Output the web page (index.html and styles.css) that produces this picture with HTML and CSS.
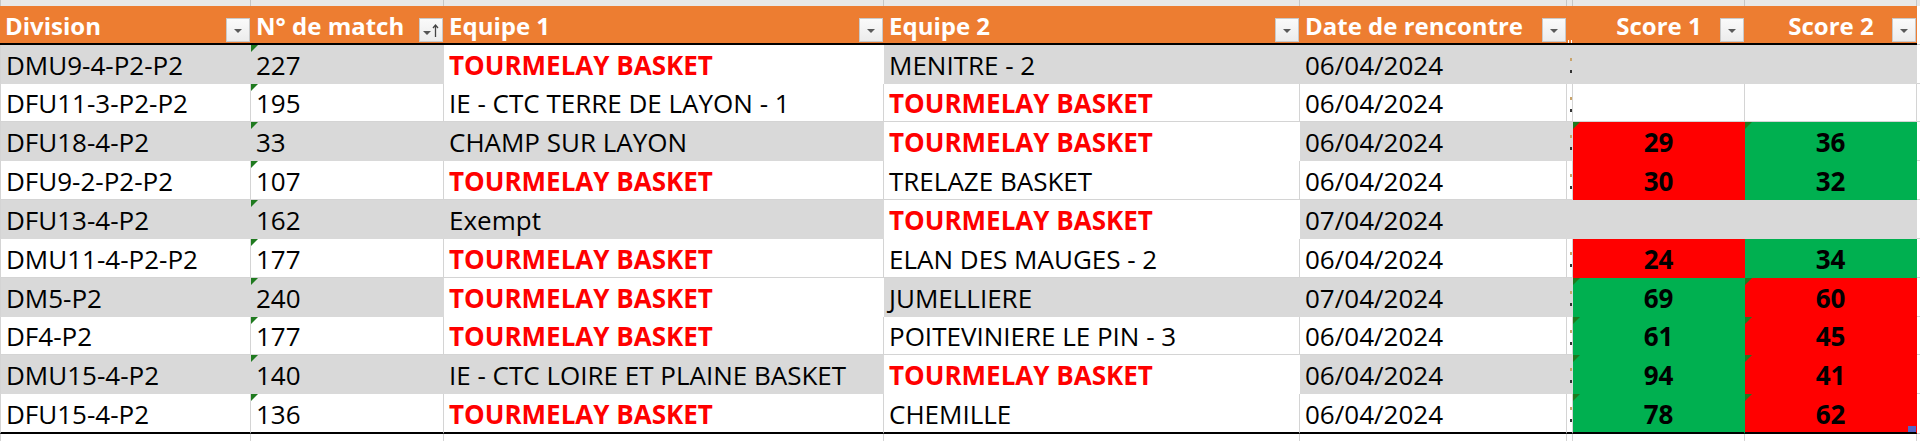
FILE: index.html
```html
<!DOCTYPE html>
<html lang="fr">
<head>
<meta charset="utf-8">
<title>Matchs</title>
<link rel="stylesheet" href="styles.css">
</head>
<body>
<div class="sheet">
  <div class="row top">
    <div class="c"></div><div class="c"></div><div class="c"></div><div class="c"></div><div class="c"></div><div class="c"></div><div class="c"></div><div class="c"></div><div class="c end"></div>
  </div>
  <div class="row head">
    <div class="h">Division<span class="dd"></span></div>
    <div class="h">N° de match<span class="dd sort"><svg width="24" height="24" viewBox="0 0 24 24"><path d="M4 13h8l-4 4z" fill="#555"/><path d="M16.5 19V7M14 10l2.5-3 2.5 3" stroke="#444" stroke-width="1.3" fill="none"/></svg></span></div>
    <div class="h">Equipe 1<span class="dd"></span></div>
    <div class="h">Equipe 2<span class="dd"></span></div>
    <div class="h">Date de rencontre<span class="dd"></span></div>
    <div class="h narrow"><span class="rs"></span></div>
    <div class="h ctr">Score 1<span class="dd"></span></div>
    <div class="h ctr">Score 2<span class="dd"></span></div>
    <div class="h end"></div>
  </div>

  <div class="row r39 band">
    <div class="c">DMU9-4-P2-P2</div><div class="c tri">227</div><div class="c w red">TOURMELAY BASKET</div><div class="c">MENITRE - 2</div><div class="c">06/04/2024</div><div class="c nar"><i></i></div><div class="c"></div><div class="c"></div><div class="c end w"></div>
  </div>
  <div class="row r38">
    <div class="c">DFU11-3-P2-P2</div><div class="c tri">195</div><div class="c">IE - CTC TERRE DE LAYON - 1</div><div class="c red">TOURMELAY BASKET</div><div class="c">06/04/2024</div><div class="c nar"><i></i></div><div class="c"></div><div class="c"></div><div class="c end"></div>
  </div>
  <div class="row r39 band">
    <div class="c">DFU18-4-P2</div><div class="c tri">33</div><div class="c">CHAMP SUR LAYON</div><div class="c w red">TOURMELAY BASKET</div><div class="c">06/04/2024</div><div class="c nar"><i></i></div><div class="c sc lose tri">29</div><div class="c sc win tri">36</div><div class="c end w"></div>
  </div>
  <div class="row r39">
    <div class="c">DFU9-2-P2-P2</div><div class="c tri">107</div><div class="c red">TOURMELAY BASKET</div><div class="c">TRELAZE BASKET</div><div class="c">06/04/2024</div><div class="c nar"><i></i></div><div class="c sc lose">30</div><div class="c sc win">32</div><div class="c end"></div>
  </div>
  <div class="row r39 band">
    <div class="c">DFU13-4-P2</div><div class="c tri">162</div><div class="c">Exempt</div><div class="c w red">TOURMELAY BASKET</div><div class="c">07/04/2024</div><div class="c nar"></div><div class="c"></div><div class="c"></div><div class="c end w"></div>
  </div>
  <div class="row r39">
    <div class="c">DMU11-4-P2-P2</div><div class="c tri">177</div><div class="c red">TOURMELAY BASKET</div><div class="c">ELAN DES MAUGES - 2</div><div class="c">06/04/2024</div><div class="c nar"><i></i></div><div class="c sc lose">24</div><div class="c sc win">34</div><div class="c end"></div>
  </div>
  <div class="row r39 band">
    <div class="c">DM5-P2</div><div class="c tri">240</div><div class="c w red">TOURMELAY BASKET</div><div class="c">JUMELLIERE</div><div class="c">07/04/2024</div><div class="c nar"><i></i></div><div class="c sc win tri">69</div><div class="c sc lose tri">60</div><div class="c end w"></div>
  </div>
  <div class="row r38">
    <div class="c">DF4-P2</div><div class="c tri">177</div><div class="c red">TOURMELAY BASKET</div><div class="c">POITEVINIERE LE PIN - 3</div><div class="c">06/04/2024</div><div class="c nar"><i></i></div><div class="c sc win tri">61</div><div class="c sc lose tri">45</div><div class="c end"></div>
  </div>
  <div class="row r39 band">
    <div class="c">DMU15-4-P2</div><div class="c tri">140</div><div class="c">IE - CTC LOIRE ET PLAINE BASKET</div><div class="c w red">TOURMELAY BASKET</div><div class="c">06/04/2024</div><div class="c nar"><i></i></div><div class="c sc win tri">94</div><div class="c sc lose tri">41</div><div class="c end w"></div>
  </div>
  <div class="row r38 last">
    <div class="c">DFU15-4-P2</div><div class="c tri">136</div><div class="c red">TOURMELAY BASKET</div><div class="c">CHEMILLE</div><div class="c">06/04/2024</div><div class="c nar"><i></i></div><div class="c sc win tri">78</div><div class="c sc lose tri">62<span class="handle"></span></div><div class="c end"></div>
  </div>

  <div class="row tail">
    <div class="c"></div><div class="c"></div><div class="c"></div><div class="c"></div><div class="c"></div><div class="c"></div><div class="c"></div><div class="c"></div><div class="c end"></div>
  </div>
</div>
</body>
</html>
```
FILE: styles.css
```css
:root {
  --grid: #d4d4d4;
  --band: #d9d9d9;
  --orange: #ed7d31;
  --red: #ff0000;
  --green: #00b050;
}

* { box-sizing: border-box; }

html, body {
  margin: 0;
  padding: 0;
  background: #ffffff;
}

body {
  font-family: "Open Sans", "Liberation Sans", sans-serif;
  font-size: 26px;
  color: #000;
  width: 1920px;
  height: 441px;
  overflow: hidden;
}

.row {
  display: grid;
  grid-template-columns: 251px 193px 440px 416px 267px 6px 172px 172px 3px;
}

.c {
  position: relative;
  display: flex;
  align-items: flex-end;
  padding: 0 0 1px 5px;
  line-height: 34px;
  white-space: nowrap;
  overflow: hidden;
  background: #fff;
  border-right: 1px solid var(--grid);
  border-bottom: 1px solid var(--grid);
}

.row > .c:first-child { border-left: 1px solid var(--grid); }

.r39 { height: 39px; }
.r38 { height: 38px; }

/* banded rows */
.band > .c { background: var(--band); border-color: var(--band); }
.band > .c:first-child { border-left-color: var(--grid); }
.band > .c.w { background: #fff; border-color: #fff; }
.band > .c.end.w { border-bottom-color: var(--grid); border-right-color: var(--grid); }

.red { color: var(--red); font-weight: 700; }

/* score cells */
.sc {
  justify-content: center;
  padding-left: 0;
  font-weight: 700;
}
.row > .c.lose { background: var(--red); border-color: var(--red); }
.row > .c.win { background: var(--green); border-color: var(--green); }

/* number-stored-as-text marker */
.tri::before {
  content: "";
  position: absolute;
  top: 0;
  left: 0;
  border-top: 7px solid #1f7a1f;
  border-right: 7px solid transparent;
}

/* narrow column with clipped glyph */
.nar { padding: 0; }
.nar i {
  position: absolute;
  right: 0;
  top: 13px;
  width: 2px;
  height: 3px;
  background: #c9a36a;
}
.nar i::after {
  content: "";
  position: absolute;
  left: 0;
  top: 12px;
  width: 2px;
  height: 3px;
  background: #333;
}

/* top partial row */
.top { height: 6px; }
.top > .c { background: #e8e8e8; border-right-color: #c6c6c6; border-bottom: 0; }
.top > .c:first-child { border-left-color: #c6c6c6; }

/* header */
.head { height: 39px; }
.h {
  position: relative;
  display: flex;
  align-items: flex-end;
  padding: 0 0 0 5px;
  background: var(--orange);
  color: #fff;
  font-weight: 700;
  font-size: 24px;
  line-height: 34px;
  white-space: nowrap;
  overflow: hidden;
  border-bottom: 2px solid #000;
}
.h.ctr { justify-content: center; padding-left: 0; }
.h.narrow { padding: 0; }
.h.end { background: #fff; border-bottom: 1px solid var(--grid); }

.dd {
  position: absolute;
  right: 1px;
  bottom: 1px;
  width: 24px;
  height: 24px;
  background: linear-gradient(#fafafa, #ececec);
  border: 1px solid #c9c9c9;
}
.dd::after {
  content: "";
  position: absolute;
  left: 7px;
  top: 10px;
  border-top: 4px solid #5a5a5a;
  border-left: 4px solid transparent;
  border-right: 4px solid transparent;
}
.dd.sort::after { display: none; }
.dd.sort svg { position: absolute; left: -1px; top: -1px; }

.rs {
  position: absolute;
  left: 1px;
  bottom: 1px;
  width: 4px;
  height: 2px;
  border-left: 1px dotted #fff;
  border-right: 1px dotted #fff;
}

/* bottom of table */
.last > .c { border-bottom: 2px solid #000; }
.last > .c.win { border-bottom-color: #000; }
.last > .c.lose { border-bottom-color: #000; }
.last > .c.end { border-bottom: 1px solid var(--grid); }
.last.r38 { height: 40px; }

.handle {
  position: absolute;
  right: 0;
  bottom: 0;
  width: 8px;
  height: 6px;
  background: #5663c4;
}

.tail { height: 7px; }
.tail > .c { border-bottom: 0; }
```
